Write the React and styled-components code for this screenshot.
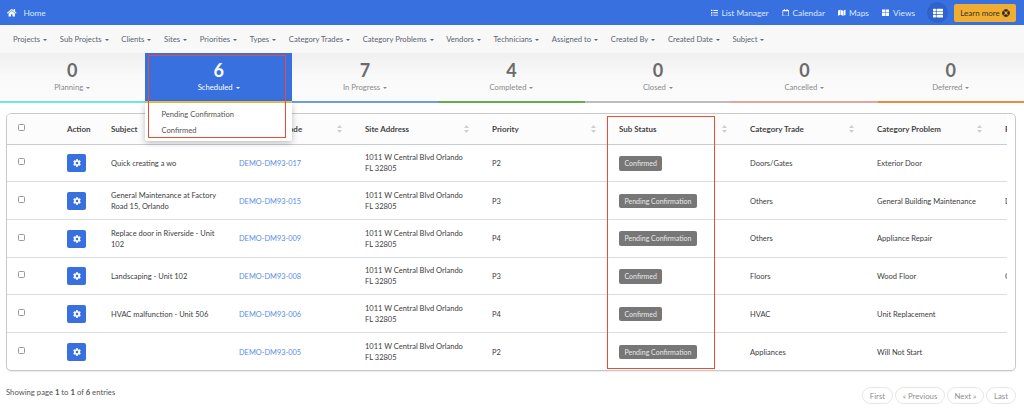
import React from 'react';
import styled, { createGlobalStyle } from 'styled-components';
import { FaHome, FaList, FaRegCalendar, FaMap, FaThLarge, FaThList, FaCog, FaLifeRing } from 'react-icons/fa';

const Global = createGlobalStyle`
  html, body { margin: 0; padding: 0; background: #fff; }
  body { font-family: "Lato", "Open Sans", sans-serif; }
  * { box-sizing: border-box; }
`;

const Page = styled.div`
  width: 1024px; height: 414px; overflow: hidden; position: relative;
  display: flex; flex-direction: column;
`;
const TopBar = styled.header`
  height: 25px; flex: none; background: #3870e0; color: #dfe8fb;
  display: flex; align-items: center; padding: 0 8px 0 7px; font-size: 8.3px;
`;
const Home = styled.a`
  display: flex; align-items: center; gap: 7px; svg { font-size: 9.5px; color: #fff; }
`;
const TopLinks = styled.nav`
  margin-left: auto; display: flex; align-items: center; gap: 13px;
`;
const TopLink = styled.a`
  display: flex; align-items: center; gap: 3.5px; svg { font-size: 7.5px; color: #fff; }
`;
const RoundBtn = styled.button`
  width: 21px; height: 21px; border-radius: 50%; border: 0; padding: 0; margin: 0 6px 0 12px;
  background: #2f62cc; color: #fff; display: grid; place-items: center; font-size: 10px;
`;
const Learn = styled.button`
  width: 62px; height: 18px; border: 0; border-radius: 2px; background: #f0ad32; color: #3a3322;
  font: 8px "Lato", sans-serif; display: flex; align-items: center; justify-content: center; gap: 2px;
  padding: 0; svg { font-size: 8px; color: #222; }
`;
const FilterBar = styled.nav`
  height: 28px; flex: none; background: #f8f8f8; display: flex; align-items: center; gap: 12.6px;
  padding-left: 13px; font-size: 7.7px; color: #5c6470;
`;
const Caret = styled.span`
  display: inline-block; margin-left: 3px; vertical-align: middle;
  border-left: 2.2px solid transparent; border-right: 2.2px solid transparent;
  border-top: 2.4px solid currentColor;
`;
const Strip = styled.section`
  height: 50px; width: 1025px; margin-left: -1px; flex: none; display: grid; grid-template-columns: repeat(7, 1fr);
  background: linear-gradient(180deg, #efefef 0%, #f9f9f9 45%, #fbfbfb 100%);
`;
const Tab = styled.div`
  position: relative; display: flex; flex-direction: column; align-items: center;
  padding-top: 8px; border-bottom: 2.5px solid ${p => p.$line};
  background: ${p => (p.$active ? '#3870e0' : 'transparent')};
  color: ${p => (p.$active ? '#fff' : '#8a8a8a')};
`;
const Count = styled.div`
  font-size: 18px; line-height: 18px; font-weight: 700;
  color: ${p => (p.$active ? '#fff' : '#6b6b6b')};
`;
const TabLabel = styled.div`
  font-size: 7.7px; margin-top: 3px; line-height: 11px;
`;
const Menu = styled.div`
  position: absolute; top: 50px; left: 0; right: 0; height: 38px; background: #fff; z-index: 3;
  box-shadow: 0 2px 6px rgba(0,0,0,.25); border-radius: 0 0 2px 2px; padding: 6px 0 0 16px;
  font-size: 7.6px; color: #555; display: flex; flex-direction: column; gap: 5px;
  line-height: 11px;
`;
const Card = styled.section`
  margin: 10px 8px 0 6px; height: 258px; flex: none; border: 1px solid #c9c9c9; border-radius: 5px;
  padding-right: 8px; background: #fff; overflow: hidden; box-shadow: 0 1px 1px rgba(0,0,0,.08);
`;
const Scroll = styled.div`
  overflow: hidden; height: 100%;
`;
const Table = styled.table`
  border-collapse: collapse; table-layout: fixed; width: 1040px; font-size: 7.5px; color: #3c3c3c;
`;
const Th = styled.th`
  height: 30px; padding: 0 12px; text-align: left; font-size: 8px; font-weight: 700; position: relative;
  background: #fcfcfd; color: #444; border-bottom: 1px solid #c8ccd4; white-space: nowrap;
`;
const Sort = styled.svg`
  position: absolute; right: 11px; top: 11px; width: 5px; height: 8px; fill: #cfcfcf;
`;
const Tr = styled.tr`
  height: 37.7px; & + & td { border-top: 1.5px solid #d9dce1; }
`;
const Td = styled.td`
  padding: 1px 12px 0; line-height: 11px; vertical-align: middle; white-space: nowrap;
`;
const Box = styled.span`
  display: block; width: 7px; height: 7px; border: 1px solid #999; border-radius: 1.5px; margin: -3px 0 0 -1px; background: #fff;
`;
const Gear = styled.button`
  display: grid; width: 19px; height: 18px; border: 0; border-radius: 2px; background: #3870e0; color: #fff;
  place-items: center; padding: 0; font-size: 8px;
`;
const Code = styled.a`
  color: #5a8de6; font-size: 7.4px;
`;
const Badge = styled.span`
  display: inline-block; height: 14.5px; line-height: 14.5px; padding: 0 5.5px; border-radius: 2px;
  background: #777; color: #e8e8e8; font-size: 7px; white-space: nowrap;
`;
const Footer = styled.footer`
  display: flex; align-items: flex-start; justify-content: space-between; margin: 16px 8px 0 6px;
  font-size: 7.7px; color: #555; line-height: 11px;
`;
const Pager = styled.div`
  display: flex; gap: 2px;
`;
const PageBtn = styled.button`
  height: 17px; width: ${p => p.$w}px; border: 1px solid #e6e6e6; border-radius: 9px; background: #fff;
  color: #8f8f8f; font: 7.8px "Lato", sans-serif; padding: 0;
`;
const Mark = styled.div`
  position: absolute; z-index: 5; border: 1px solid #ee4b36; pointer-events: none;
  left: ${p => p.$x}px; top: ${p => p.$y}px; width: ${p => p.$w}px; height: ${p => p.$h}px;
`;

const filters = ['Projects','Sub Projects','Clients','Sites','Priorities','Types','Category Trades','Category Problems','Vendors','Technicians','Assigned to','Created By','Created Date','Subject'];
const tabs = [
  ['0','Planning','#6fe6e2'],['6','Scheduled','#e8c24f'],['7','In Progress','#6a9ee6'],['4','Completed','#66ad4f'],
  ['0','Closed','#bdbdbd'],['0','Cancelled','#e2a6a0'],['0','Deferred','#ef8a3a'],
];
const cols = [
  ['', 48],['Action', 44],['Subject', 128],['Work Order Code', 126],['Site Address', 127],['Priority', 127],
  ['Sub Status', 131],['Category Trade', 127],['Category Problem', 128],['F', 120],
];
const addr = <>1011 W Central Blvd Orlando<br />FL 32805</>;
const rows = [
  ['Quick creating a wo','DEMO-DM93-017','P2','Confirmed','Doors/Gates','Exterior Door',''],
  [<>General Maintenance at Factory<br />Road 15, Orlando</>,'DEMO-DM93-015','P3','Pending Confirmation','Others','General Building Maintenance','D'],
  [<>Replace door in Riverside - Unit<br />102</>,'DEMO-DM93-009','P4','Pending Confirmation','Others','Appliance Repair',''],
  ['Landscaping - Unit 102','DEMO-DM93-008','P3','Confirmed','Floors','Wood Floor','C'],
  ['HVAC malfunction - Unit 506','DEMO-DM93-006','P4','Confirmed','HVAC','Unit Replacement',''],
  ['','DEMO-DM93-005','P2','Pending Confirmation','Appliances','Will Not Start',''],
];
const top = [[FaList,'List Manager'],[FaRegCalendar,'Calendar'],[FaMap,'Maps'],[FaThLarge,'Views']];

const SortIcon = () => (
  <Sort viewBox="0 0 5 8"><path d="M2.5 0L5 3H0zM2.5 8L0 5h5z" /></Sort>
);

export default function App() {
  return (
    <Page>
      <Global />
      <TopBar>
        <Home><FaHome />Home</Home>
        <TopLinks>
          {top.map(([I, t]) => <TopLink key={t}><I />{t}</TopLink>)}
        </TopLinks>
        <RoundBtn><FaThList /></RoundBtn>
        <Learn>Learn more <FaLifeRing /></Learn>
      </TopBar>
      <FilterBar>
        {filters.map(f => <span key={f}>{f}<Caret /></span>)}
      </FilterBar>
      <Strip>
        {tabs.map(([n, l, c]) => {
          const active = l === 'Scheduled';
          return (
            <Tab key={l} $line={c} $active={active}>
              <Count $active={active}>{n}</Count>
              <TabLabel>{l}<Caret /></TabLabel>
              {active && <Menu><span>Pending Confirmation</span><span>Confirmed</span></Menu>}
            </Tab>
          );
        })}
      </Strip>
      <Card>
        <Scroll>
          <Table>
            <colgroup>{cols.map(([n, w], i) => <col key={i} style={{ width: w }} />)}</colgroup>
            <thead>
              <tr>
                {cols.map(([n], i) => (
                  <Th key={i}>
                    {i === 0 ? <Box /> : n}
                    {i > 2 && i < 9 && <SortIcon />}
                  </Th>
                ))}
              </tr>
            </thead>
            <tbody>
              {rows.map(r => (
                <Tr key={r[1]}>
                  <Td><Box /></Td>
                  <Td><Gear><FaCog /></Gear></Td>
                  <Td>{r[0]}</Td>
                  <Td><Code>{r[1]}</Code></Td>
                  <Td>{addr}</Td>
                  <Td>{r[2]}</Td>
                  <Td><Badge>{r[3]}</Badge></Td>
                  <Td>{r[4]}</Td>
                  <Td>{r[5]}</Td>
                  <Td>{r[6]}</Td>
                </Tr>
              ))}
            </tbody>
          </Table>
        </Scroll>
      </Card>
      <Footer>
        <span>Showing page <b>1</b> to <b>1</b> of <b>6</b> entries</span>
        <Pager>
          <PageBtn $w={31}>First</PageBtn>
          <PageBtn $w={50}>« Previous</PageBtn>
          <PageBtn $w={37}>Next »</PageBtn>
          <PageBtn $w={30}>Last</PageBtn>
        </Pager>
      </Footer>
      <Mark $x={148} $y={55} $w={138} $h={83} />
      <Mark $x={607} $y={116} $w={108} $h={253} />
    </Page>
  );
}
